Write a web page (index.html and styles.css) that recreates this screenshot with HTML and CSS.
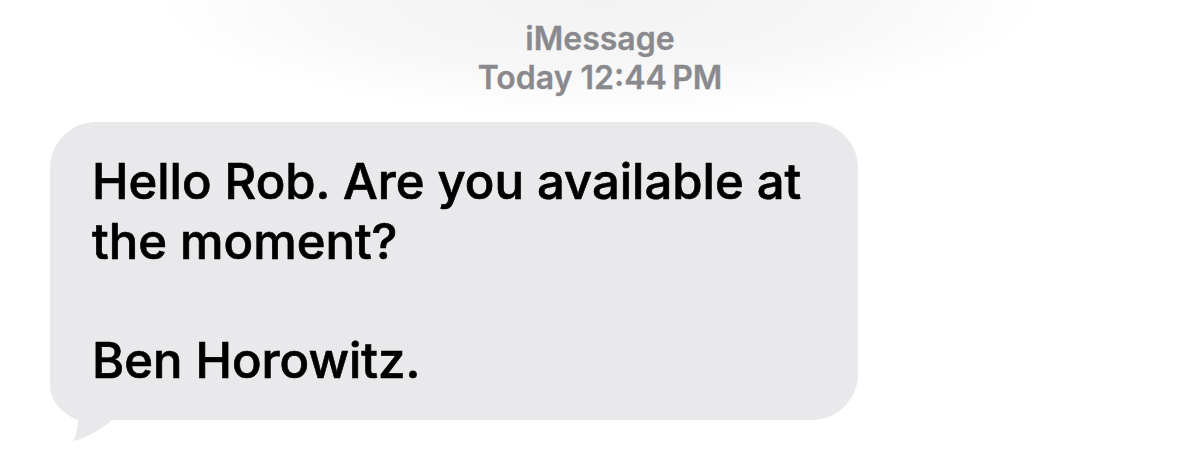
FILE: index.html
```html
<!DOCTYPE html>
<html lang="en">
<head>
    <meta charset="UTF-8">
    <meta name="viewport" content="width=device-width, initial-scale=1.0">
    <title>iMessage</title>
    <link rel="stylesheet" href="styles.css">
</head>
<body>
    <div class="thread">
        <div class="thread-header">
            <div class="service">iMessage</div>
            <div class="timestamp">Today 12:44&#8201;PM</div>
        </div>

        <div class="message incoming">
            <!-- bubble tail -->
            <svg class="tail" width="80" height="60" viewBox="0 0 80 60">
                <path d="M0,0 L0,25 C0,42 14,55 28,60 C28,68 26,76 23,81 C35,79 50,70 62,60 L80,60 L80,0 Z" fill="#e9e9eb"/>
            </svg>
            <p class="message-text">Hello Rob. Are you available at<br>the moment?<br><br>Ben Horowitz.</p>
        </div>
    </div>
</body>
</html>
```

FILE: styles.css
```css
body {
    margin: 0;
    height: 100vh;
    background: radial-gradient(ellipse 440px 115px at 50% 0, #f2f2f2 0%, #f7f7f7 60%, #ffffff 100%);
    background-color: #fff;
    font-family: Inter, "Liberation Sans", Arial, sans-serif;
    overflow: hidden;
}

.thread {
    display: flex;
    flex-direction: column;
}

.thread-header {
    padding-top: 19px;
    text-align: center;
    color: #8a8a8e;
    font-size: 32px;
    font-weight: 600;
    line-height: 39px;
    -webkit-text-stroke: 0.3px #8a8a8e;
}

.message {
    position: relative;
    align-self: flex-start;
    margin: 25px 0 0 50px;
    width: 808px;
    box-sizing: border-box;
    padding: 30px 42px;
    background-color: #e9e9eb;
    border-radius: 46px;
}

.message-text {
    position: relative;
    margin: 0;
    color: #000;
    font-size: 49px;
    font-weight: 500;
    line-height: 59.5px;
    white-space: nowrap;
    -webkit-text-stroke: 0.7px #000;
}

.tail {
    position: absolute;
    left: 0;
    bottom: 0;
    overflow: visible;
}
```
